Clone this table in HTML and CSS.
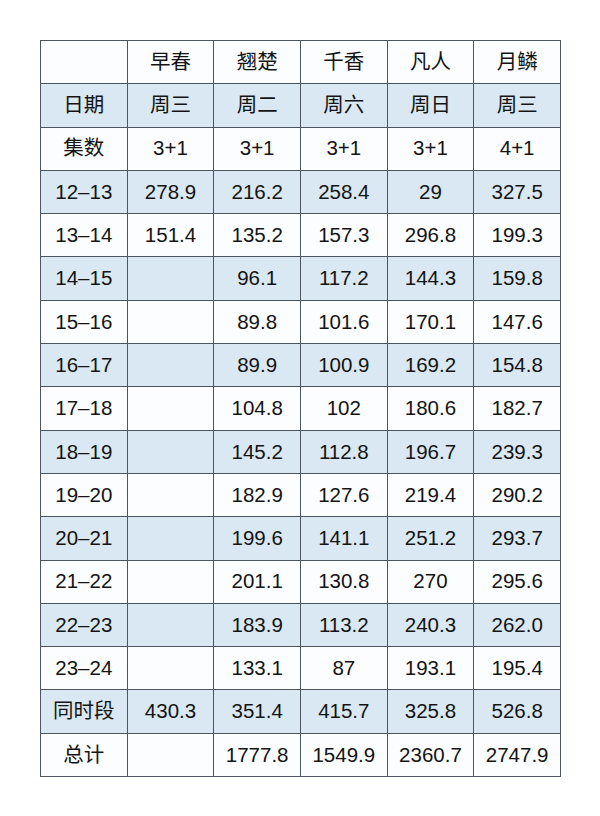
FILE: index.html
```html
<!DOCTYPE html>
<html lang="zh-CN">
<head>
<meta charset="utf-8">
<link rel="stylesheet" href="styles.css">
</head>
<body>
<table class="grid">
<tr class="w"><td></td><td>早春</td><td>翘楚</td><td>千香</td><td>凡人</td><td>月鳞</td></tr>
<tr class="b"><td>日期</td><td>周三</td><td>周二</td><td>周六</td><td>周日</td><td>周三</td></tr>
<tr class="w"><td>集数</td><td>3+1</td><td>3+1</td><td>3+1</td><td>3+1</td><td>4+1</td></tr>
<tr class="b"><td>12–13</td><td>278.9</td><td>216.2</td><td>258.4</td><td>29</td><td>327.5</td></tr>
<tr class="w"><td>13–14</td><td>151.4</td><td>135.2</td><td>157.3</td><td>296.8</td><td>199.3</td></tr>
<tr class="b"><td>14–15</td><td></td><td>96.1</td><td>117.2</td><td>144.3</td><td>159.8</td></tr>
<tr class="w"><td>15–16</td><td></td><td>89.8</td><td>101.6</td><td>170.1</td><td>147.6</td></tr>
<tr class="b"><td>16–17</td><td></td><td>89.9</td><td>100.9</td><td>169.2</td><td>154.8</td></tr>
<tr class="w"><td>17–18</td><td></td><td>104.8</td><td>102</td><td>180.6</td><td>182.7</td></tr>
<tr class="b"><td>18–19</td><td></td><td>145.2</td><td>112.8</td><td>196.7</td><td>239.3</td></tr>
<tr class="w"><td>19–20</td><td></td><td>182.9</td><td>127.6</td><td>219.4</td><td>290.2</td></tr>
<tr class="b"><td>20–21</td><td></td><td>199.6</td><td>141.1</td><td>251.2</td><td>293.7</td></tr>
<tr class="w"><td>21–22</td><td></td><td>201.1</td><td>130.8</td><td>270</td><td>295.6</td></tr>
<tr class="b"><td>22–23</td><td></td><td>183.9</td><td>113.2</td><td>240.3</td><td>262.0</td></tr>
<tr class="w"><td>23–24</td><td></td><td>133.1</td><td>87</td><td>193.1</td><td>195.4</td></tr>
<tr class="b"><td>同时段</td><td>430.3</td><td>351.4</td><td>415.7</td><td>325.8</td><td>526.8</td></tr>
<tr class="w"><td>总计</td><td></td><td>1777.8</td><td>1549.9</td><td>2360.7</td><td>2747.9</td></tr>
</table>
</body>
</html>
```
FILE: styles.css
```css
html, body {
  margin: 0;
  padding: 0;
  background: #ffffff;
}
body {
  padding: 40px 0 0 40px;
  font-family: "Liberation Sans", "Noto Sans CJK SC", sans-serif;
  color: #141414;
}
.grid {
  border-collapse: collapse;
  width: 521px;
  height: 737px;
  table-layout: fixed;
  border: 1.5px solid #4d5660;
}
.grid td {
  border: 1px solid #4d5660;
  text-align: center;
  vertical-align: middle;
  font-size: 20.5px;
  padding: 0;
  height: 42.3px;
  line-height: 1;
}
.grid tr.b td {
  background: #d9e8f2;
}
.grid tr.w td {
  background: #fcfdfe;
}
```
